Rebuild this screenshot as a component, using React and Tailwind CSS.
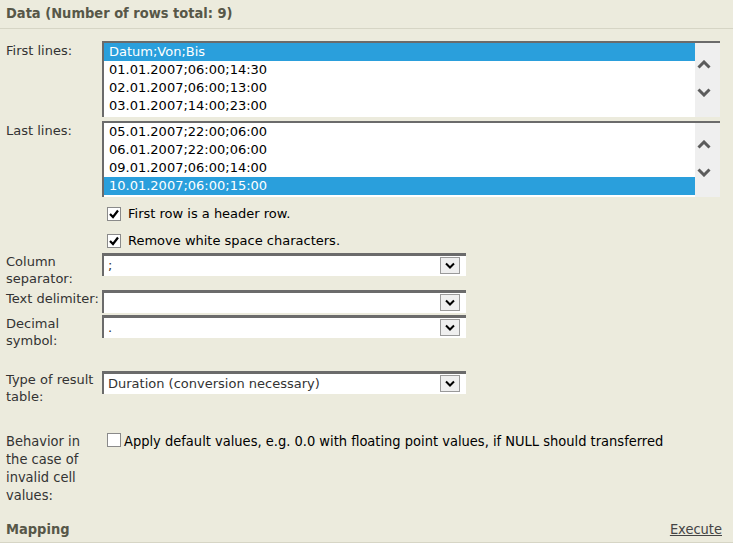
const firstLines = ["Datum;Von;Bis", "01.01.2007;06:00;14:30", "02.01.2007;06:00;13:00", "03.01.2007;14:00;23:00"];
const lastLines = ["05.01.2007;22:00;06:00", "06.01.2007;22:00;06:00", "09.01.2007;06:00;14:00", "10.01.2007;06:00;15:00"];

const condensed = { fontFamily: '"DejaVu Sans Condensed", "DejaVu Sans", sans-serif' };

const Chevron = ({ up }) => (
  <svg width="14" height="9" viewBox="0 0 14 9">
    <path d={up ? "M1.5 7.5 L7 2 L12.5 7.5" : "M1.5 1.5 L7 7 L12.5 1.5"} fill="none" stroke="currentColor" strokeWidth="3" />
  </svg>
);

const ListBox = ({ lines, selected }) => (
  <div className="flex-1 flex h-[76px] border-t-2 border-l-2 border-[#6b6b6b] bg-white mr-[13px]">
    <div className="flex-1">
      {lines.map((line, idx) => (
        <div key={idx} className={"h-[18px] leading-[18px] pl-[5px] " + (idx === selected ? "bg-[#2a9fdc] text-white" : "text-black")}>{line}</div>
      ))}
    </div>
    <div className="w-[25px] bg-[#efefef] flex flex-col items-start pl-[2px] pt-[17px] gap-[19px] text-[#5c5c5c]">
      <Chevron up />
      <Chevron />
    </div>
  </div>
);

const Check = ({ checked }) => (
  <span className="w-[14px] h-[14px] border border-[#8a8a8a] bg-white flex items-center justify-center shrink-0">
    {checked && (
      <svg width="12" height="12" viewBox="0 0 12 12">
        <path d="M2 6 L5 9 L10 2.5" fill="none" stroke="black" strokeWidth="2.2" />
      </svg>
    )}
  </span>
);

const Select = ({ value }) => (
  <div className="w-[364px] h-[23px] flex border-t-[3px] border-l-2 border-[#6b6b6b] bg-white">
    <div className="flex-1 pl-[4px] leading-[19px]">{value}</div>
    <div className="w-[20px] h-[17px] mr-[6px] mt-[1px] border border-[#9a9a9a] bg-[#efefef] flex items-center justify-center">
      <svg width="10" height="7" viewBox="0 0 10 7"><path d="M1 1.5 L5 5.5 L9 1.5" fill="none" stroke="black" strokeWidth="2" /></svg>
    </div>
  </div>
);

const Label = ({ children, className = "" }) => (
  <div className={"w-[96px] shrink-0 leading-[17px] " + className}>{children}</div>
);

export default function App() {
  return (
    <div className="w-[733px] h-[543px] bg-[#ecebdd] text-[13px] text-[#333] overflow-hidden" style={{ fontFamily: '"DejaVu Sans", sans-serif' }}>
      <div className="h-[29px] border-b border-[#d6d5c5] pl-[6px] pt-[3px] text-[14.5px] font-bold text-[#575748]" style={condensed}>Data (Number of rows total: 9)</div>

      <div className="flex pl-[6px] mt-[12px]">
        <Label className="pt-[1px]">First lines:</Label>
        <ListBox lines={firstLines} selected={0} />
      </div>
      <div className="flex pl-[6px] mt-[4px]">
        <Label className="pt-[1px]">Last lines:</Label>
        <ListBox lines={lastLines} selected={3} />
      </div>

      <div className="pl-[107px] mt-[10px] flex items-center gap-[7px] text-black h-[14px]">
        <Check checked /> <span>First row is a header row.</span>
      </div>
      <div className="pl-[107px] mt-[13px] flex items-center gap-[7px] text-black h-[14px]">
        <Check checked /> <span>Remove white space characters.</span>
      </div>

      <div className="flex pl-[6px] mt-[5px]">
        <Label>Column separator:</Label>
        <Select value=";" />
      </div>
      <div className="flex pl-[6px] mt-[3px]">
        <Label>Text delimiter:</Label>
        <Select value="" />
      </div>
      <div className="flex pl-[6px] mt-[2px]">
        <Label>Decimal symbol:</Label>
        <Select value="." />
      </div>
      <div className="flex pl-[6px] mt-[22px]">
        <Label>Type of result table:</Label>
        <Select value="Duration (conversion necessary)" />
      </div>

      <div className="flex pl-[6px] mt-[27px] text-[14.5px]" style={condensed}>
        <Label className="leading-[18px]">Behavior in the case of invalid cell values:</Label>
        <div className="flex items-start gap-[3px] pl-[5px] text-black">
          <span className="mt-[1px]"><Check /></span>
          <span className="leading-[18px]">Apply default values, e.g. 0.0 with floating point values, if NULL should transferred</span>
        </div>
      </div>

      <div className="flex justify-between items-center pl-[6px] pr-[11px] mt-[14px] h-[25px] border-b border-[#d6d5c5] text-[14.5px]" style={condensed}>
        <span className="font-bold text-[#575748]">Mapping</span>
        <span className="underline text-[#444]">Execute</span>
      </div>
    </div>
  );
}
